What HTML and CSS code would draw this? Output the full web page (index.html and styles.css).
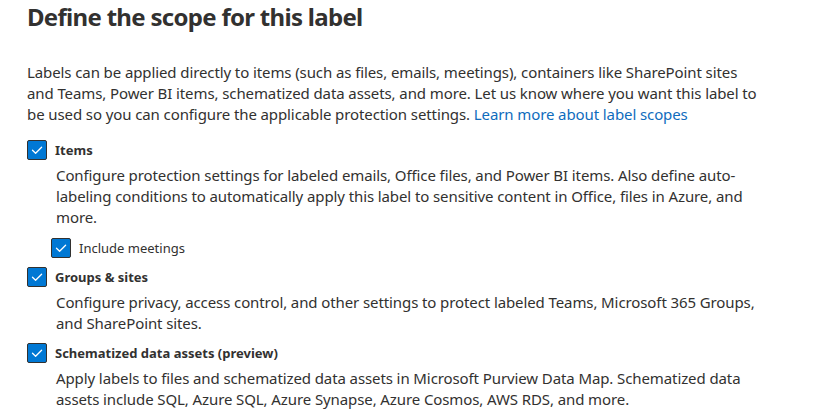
FILE: index.html
```html
<!DOCTYPE html>
<html lang="en">
<head>
<meta charset="utf-8">
<link rel="stylesheet" href="styles.css">
</head>
<body>
<main class="page">
  <h1 class="title">Define the scope for this label</h1>
  <p class="intro">Labels can be applied directly to items (such as files, emails, meetings), containers like SharePoint sites and Teams, Power BI items, schematized data assets, and more. Let us know where you want this label to be&nbsp;used so you can configure the applicable protection settings. <a class="link" href="#">Learn more about label scopes</a></p>

  <section class="option">
    <label class="check-row">
      <span class="box"><svg viewBox="0 0 20 20" width="20" height="20"><path d="M5.5 10.2 L8.6 13.2 L14.6 7.2" fill="none" stroke="#fff" stroke-width="1.3" stroke-linecap="round" stroke-linejoin="round"/></svg></span>
      <span class="check-label">Items</span>
    </label>
    <p class="desc">Configure protection settings for labeled emails, Office files, and Power BI items. Also define auto-labeling conditions to automatically apply this label to sensitive content in Office, files in Azure, and more.</p>
    <label class="check-row sub">
      <span class="box"><svg viewBox="0 0 20 20" width="20" height="20"><path d="M5.5 10.2 L8.6 13.2 L14.6 7.2" fill="none" stroke="#fff" stroke-width="1.3" stroke-linecap="round" stroke-linejoin="round"/></svg></span>
      <span class="sub-label">Include meetings</span>
    </label>
  </section>

  <section class="option">
    <label class="check-row">
      <span class="box"><svg viewBox="0 0 20 20" width="20" height="20"><path d="M5.5 10.2 L8.6 13.2 L14.6 7.2" fill="none" stroke="#fff" stroke-width="1.3" stroke-linecap="round" stroke-linejoin="round"/></svg></span>
      <span class="check-label">Groups &amp; sites</span>
    </label>
    <p class="desc">Configure privacy, access control, and other settings to protect labeled Teams, Microsoft 365 Groups, and SharePoint sites.</p>
  </section>

  <section class="option">
    <label class="check-row">
      <span class="box"><svg viewBox="0 0 20 20" width="20" height="20"><path d="M5.5 10.2 L8.6 13.2 L14.6 7.2" fill="none" stroke="#fff" stroke-width="1.3" stroke-linecap="round" stroke-linejoin="round"/></svg></span>
      <span class="check-label">Schematized data assets (preview)</span>
    </label>
    <p class="desc">Apply labels to files and schematized data assets in Microsoft Purview Data Map. Schematized data assets include SQL, Azure SQL, Azure Synapse, Azure Cosmos, AWS RDS, and more.</p>
  </section>
</main>
</body>
</html>
```

FILE: styles.css
```css
html, body {
  margin: 0;
  padding: 0;
  background: #ffffff;
}

body {
  font-family: "Segoe UI", "Noto Sans", "Open Sans", sans-serif;
  color: #323130;
}

.page {
  padding: 0 0 0 27px;
  width: 745px;
}

.title {
  margin: 0;
  padding-top: 1px;
  font-size: 24px;
  line-height: 32px;
  font-weight: 700;
  letter-spacing: -0.7px;
  color: #323130;
}

.intro {
  margin: 29px 0 0 0;
  width: 731px;
  font-size: 15px;
  letter-spacing: -0.1px;
  line-height: 21px;
}

.link {
  color: #0f6cbd;
  text-decoration: none;
}

.option {
  display: flex;
  flex-direction: column;
}

.intro + .option {
  margin-top: 15px;
}

.option + .option {
  margin-top: 9px;
}

.check-row {
  display: flex;
  align-items: center;
  gap: 8px;
  height: 20px;
}

.box {
  width: 20px;
  height: 20px;
  box-sizing: border-box;
  border: 1px solid #323130;
  border-radius: 2px;
  background: #0078d4;
  display: flex;
  align-items: center;
  justify-content: center;
  flex: none;
}

.box svg {
  display: block;
  margin: -1px;
}

.check-label {
  font-size: 13px;
  font-weight: 700;
}

.desc {
  margin: 5px 0 0 29px;
  font-size: 15px;
  letter-spacing: -0.1px;
  line-height: 21px;
}

.check-row.sub {
  margin: 10px 0 0 24px;
}

.sub-label {
  font-size: 13px;
}
```
